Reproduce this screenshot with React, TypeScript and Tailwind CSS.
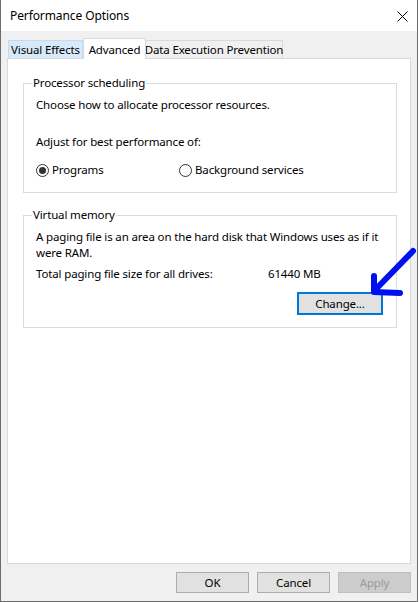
export default function App() {
  return (
    <div className="w-[418px] h-[602px] flex flex-col border-l border-r border-b border-[#6d6d6d] bg-white text-[11.5px] tracking-[-0.15px] text-black font-['Segoe_UI','Noto_Sans',sans-serif] relative overflow-hidden">
      {/* title bar */}
      <div className="h-[31px] flex items-center justify-between pl-[9px] pr-[9px] bg-white text-[12px] tracking-[-0.1px]">
        <span>Performance Options</span>
        <svg width="11" height="11" viewBox="0 0 11 11" className="mt-[1px]">
          <path d="M0.5 0.5 L10.5 10.5 M10.5 0.5 L0.5 10.5" stroke="#000" strokeWidth="1" />
        </svg>
      </div>

      <div className="flex-1 flex flex-col bg-[#f0f0f0] px-[6px] pt-[7px]">
        {/* tabs */}
        <div className="h-[20px] flex items-end pl-[1px] whitespace-nowrap">
          <div className="w-[75px] h-[18px] flex items-center justify-center bg-[#d8eaf9] border border-b-0 border-[#c0dcf3]">
            Visual Effects
          </div>
          <div className="w-[63px] h-[21px] -mb-px relative z-10 flex items-start pt-[2px] justify-center bg-white border border-b-0 border-[#d9d9d9]">
            Advanced
          </div>
          <div className="w-[137px] h-[18px] flex items-center justify-center bg-[#f0f0f0] border border-b-0 border-l-0 border-[#d9d9d9]">
            Data Execution Prevention
          </div>
        </div>

        {/* tab panel */}
        <div className="h-[506px] bg-white border border-[#d9d9d9] pl-[15px] pr-[13px] pt-[24px]">
          {/* processor scheduling */}
          <div className="border border-[#dcdcdc] pl-[12px] pb-[14px] leading-[16px]">
            <div className="-mt-[9px] -ml-[4px]">
              <span className="bg-white px-[1px]">Processor scheduling</span>
            </div>
            <div className="mt-[6px]">Choose how to allocate processor resources.</div>
            <div className="mt-[21px]">Adjust for best performance of:</div>
            <div className="mt-[12px] flex items-center h-[16px]">
              <div className="w-[143px] flex items-center gap-[3px]">
                <span className="w-[13px] h-[13px] rounded-full border border-[#333] flex items-center justify-center">
                  <span className="w-[7px] h-[7px] rounded-full bg-[#333]" />
                </span>
                <span>Programs</span>
              </div>
              <div className="flex items-center gap-[3px]">
                <span className="w-[13px] h-[13px] rounded-full border border-[#333]" />
                <span>Background services</span>
              </div>
            </div>
          </div>

          {/* virtual memory */}
          <div className="mt-[22px] border border-[#dcdcdc] pl-[12px] pr-[13px] pb-[12px] leading-[16px]">
            <div className="-mt-[9px] -ml-[4px]">
              <span className="bg-white px-[1px]">Virtual memory</span>
            </div>
            <div className="mt-[6px] whitespace-nowrap">
              A paging file is an area on the hard disk that Windows uses as if it
              <br />
              were RAM.
            </div>
            <div className="mt-[5px] flex">
              <span className="w-[232px]">Total paging file size for all drives:</span>
              <span>61440 MB</span>
            </div>
            <div className="mt-[10px] flex justify-end">
              <button className="w-[86px] h-[23px] bg-[#e1e1e1] border-2 border-[#0078d7] flex items-center justify-center">
                Change...
              </button>
            </div>
          </div>
        </div>

        {/* dialog buttons */}
        <div className="flex justify-end gap-[8px] pt-[8px]">
          <button className="w-[73px] h-[21px] bg-[#e1e1e1] border border-[#adadad] flex items-center justify-center">
            OK
          </button>
          <button className="w-[73px] h-[21px] bg-[#e1e1e1] border border-[#adadad] flex items-center justify-center">
            Cancel
          </button>
          <button className="w-[73px] h-[21px] bg-[#cccccc] border border-[#bfbfbf] text-[#9a9a9a] flex items-center justify-center">
            Apply
          </button>
        </div>
      </div>

      {/* hand drawn arrow */}
      <svg className="absolute left-0 top-0 pointer-events-none" width="419" height="602">
        <path
          d="M412 251 L375 289 M373 276 L373 292 L399 293"
          fill="none"
          stroke="#0010f0"
          strokeWidth="6"
          strokeLinecap="round"
          strokeLinejoin="round"
        />
      </svg>
    </div>
  );
}
